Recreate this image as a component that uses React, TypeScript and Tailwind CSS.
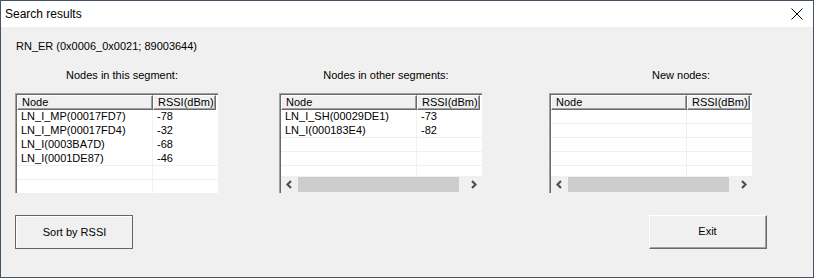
import React from 'react';

type Row = { node: string; rssi: string };

const thisSegment: Row[] = [
  { node: 'LN_I_MP(00017FD7)', rssi: '-78' },
  { node: 'LN_I_MP(00017FD4)', rssi: '-32' },
  { node: 'LN_I(0003BA7D)', rssi: '-68' },
  { node: 'LN_I(0001DE87)', rssi: '-46' },
];

const otherSegments: Row[] = [
  { node: 'LN_I_SH(00029DE1)', rssi: '-73' },
  { node: 'LN_I(000183E4)', rssi: '-82' },
];

function Chevron({ dir }: { dir: 'left' | 'right' }) {
  return (
    <svg width="17" height="17" viewBox="0 0 17 17">
      {dir === 'left' ? (
        <path d="M10 5 L6.5 8.5 L10 12" fill="none" stroke="#505050" strokeWidth="2.2" />
      ) : (
        <path d="M7 5 L10.5 8.5 L7 12" fill="none" stroke="#505050" strokeWidth="2.2" />
      )}
    </svg>
  );
}

function HeaderCell({ label, width }: { label: string; width: string }) {
  return (
    <div
      className={`${width} h-[15px] shrink-0 bg-[#f0f0f0] border-t border-l border-white border-r border-b border-r-[#696969] border-b-[#696969] shadow-[inset_-1px_-1px_#a0a0a0] pl-[4px] leading-[12px] overflow-hidden whitespace-nowrap`}
    >
      {label}
    </div>
  );
}

function NodeList({ rows, scroll }: { rows: Row[]; scroll?: boolean }) {
  const slots = scroll ? 5 : 6;
  const items: (Row | null)[] = [];
  for (let i = 0; i < slots; i++) items.push(rows[i] ?? null);
  return (
    <div className="w-[203px] h-[100px] shrink-0 border-t border-l border-[#a0a0a0] border-r-white border-b-white">
      <div className="w-full h-full border-t border-l border-[#696969] border-r-[#e3e3e3] border-b-[#e3e3e3] bg-white flex flex-col overflow-hidden">
        <div className="flex">
          <HeaderCell label="Node" width="w-[136px]" />
          <HeaderCell label="RSSI(dBm)" width="w-[63px]" />
        </div>
        <div className="flex-1 overflow-hidden">
          {items.map((r, i) => {
            const lined = r === null || i === rows.length - 1;
            return (
              <div
                key={i}
                className={`flex h-[14px] leading-[13px] ${lined ? 'border-b border-[#f0f0f0]' : ''}`}
              >
                <div className="w-[136px] shrink-0 pl-[4px] border-r border-[#f0f0f0] whitespace-nowrap">
                  {r?.node}
                </div>
                <div className="w-[63px] shrink-0 pl-[4px]">{r?.rssi}</div>
              </div>
            );
          })}
        </div>
        {scroll && (
          <div className="h-[17px] shrink-0 bg-[#f0f0f0] flex">
            <Chevron dir="left" />
            <div className="w-[161px] my-[1px] bg-[#cdcdcd]" />
            <div className="ml-auto">
              <Chevron dir="right" />
            </div>
          </div>
        )}
      </div>
    </div>
  );
}

export default function App() {
  return (
    <div
      className="w-[814px] h-[278px] border border-[#435466] flex flex-col text-black text-[11px]"
      style={{ fontFamily: '"Liberation Sans", Arial, sans-serif' }}
    >
      <div className="h-[26px] bg-white flex items-center pl-[4px] pr-[10px]">
        <span className="text-[12px]">Search results</span>
        <svg className="ml-auto" width="12" height="12" viewBox="0 0 12 12">
          <path d="M0.5 0.5 L11.5 11.5 M11.5 0.5 L0.5 11.5" stroke="#000" strokeWidth="1" />
        </svg>
      </div>

      <div className="flex-1 bg-[#f0f0f0] flex flex-col">
        <p className="mt-[13px] pl-[15px] leading-[13px]">RN_ER (0x0006_0x0021; 89003644)</p>

        <div className="flex mt-[16px] pl-[14px] leading-[13px]">
          <span className="w-[214px] text-center">Nodes in this segment:</span>
          <span className="w-[214px] ml-[50px] text-center">Nodes in other segments:</span>
          <span className="w-[264px] ml-[56px] text-center">New nodes:</span>
        </div>

        <div className="flex mt-[11px] pl-[14px]">
          <NodeList rows={thisSegment} />
          <div className="ml-[61px]">
            <NodeList rows={otherSegments} scroll />
          </div>
          <div className="ml-[67px]">
            <NodeList rows={[]} scroll />
          </div>
        </div>

        <div className="flex mt-[22px] pl-[14px] pr-[46px]">
          <button className="w-[118px] h-[34px] border border-[#646464] bg-[#f0f0f0]">
            <div className="w-full h-full border-t border-l border-white border-r-[#a0a0a0] border-b-[#a0a0a0] flex items-center justify-center">
              Sort by RSSI
            </div>
          </button>
          <button className="ml-auto w-[118px] h-[34px] border-t border-l border-white border-r border-b border-r-[#696969] border-b-[#696969] bg-[#f0f0f0]">
            <div className="w-full h-full border-r border-b border-[#a0a0a0] flex items-center justify-center">
              Exit
            </div>
          </button>
        </div>
      </div>
    </div>
  );
}
